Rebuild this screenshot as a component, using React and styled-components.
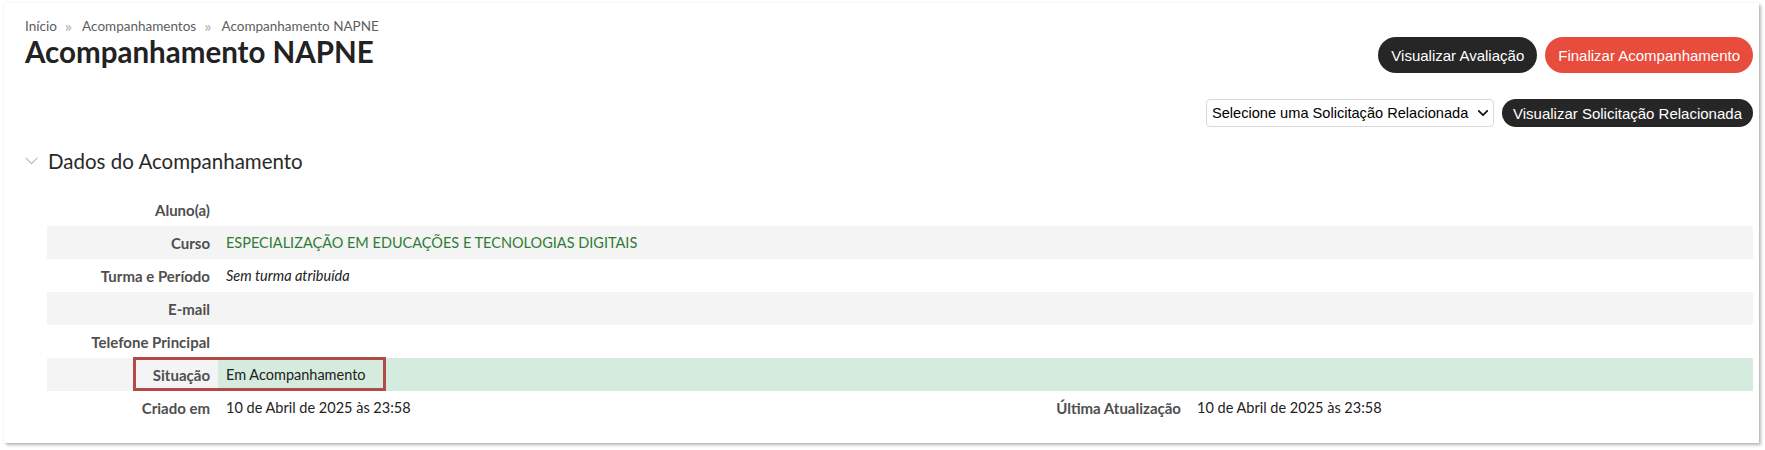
import styled, { createGlobalStyle } from 'styled-components';

const GlobalStyle = createGlobalStyle`
  html, body {
    margin: 0;
    padding: 0;
    background: #ffffff;
  }
  body {
    font-family: Lato, "Noto Sans", sans-serif;
    color: #222;
  }
`;

const Page = styled.div`
  padding: 3px 6px 7px 4px;
`;

const Card = styled.div`
  background: #fff;
  box-shadow: 2px 2px 3px rgba(0, 0, 0, 0.28), 0 0 2px rgba(0, 0, 0, 0.08);
  padding: 14px 6px 19px 21px;
`;

const Header = styled.div`
  display: flex;
  justify-content: space-between;
  align-items: flex-start;
`;

const TitleBlock = styled.div`
  display: flex;
  flex-direction: column;
`;

const Breadcrumb = styled.nav`
  display: flex;
  align-items: center;
  font-size: 13.5px;
  line-height: 18px;
  color: #5e5e5e;
`;

const Crumb = styled.span``;

const Separator = styled.span`
  color: #bdbdbd;
  margin: 0 10px 0 8px;
  font-size: 16px;
  font-weight: 700;
  line-height: 18px;
`;

const Title = styled.h1`
  margin: 0;
  font-size: 29.5px;
  line-height: 34px;
  font-weight: 700;
  color: #222;
`;

const ButtonGroup = styled.div`
  display: flex;
  align-items: center;
  gap: 8px;
  margin-top: ${({ $top }) => $top || 0}px;
`;

const PillButton = styled.button`
  font-family: "Liberation Sans", Arial, sans-serif;
  font-size: 15px;
  color: #fff;
  border: none;
  cursor: pointer;
  height: ${({ $small }) => ($small ? 28 : 36)}px;
  border-radius: 18px;
  padding: 0 ${({ $small }) => ($small ? 11 : 13)}px;
  background: ${({ $variant }) => ($variant === 'danger' ? '#e74c3c' : '#262626')};
  white-space: nowrap;
`;

const Toolbar = styled.div`
  display: flex;
  justify-content: flex-end;
  align-items: center;
  gap: 8px;
  margin-top: 26px;
`;

const SelectBox = styled.label`
  display: flex;
  align-items: center;
  gap: 2px;
  box-sizing: border-box;
  width: 288px;
  height: 28px;
  border: 1px solid #d9d9d9;
  border-radius: 4px;
  padding: 0 5px 0 5px;
  background: #fff;
`;

const Select = styled.select`
  appearance: none;
  border: none;
  outline: none;
  background: transparent;
  font-family: "Liberation Sans", Arial, sans-serif;
  font-size: 14.6px;
  color: #000;
  padding: 0;
  flex: 1;
  min-width: 0;
`;

const SectionHeader = styled.div`
  display: flex;
  align-items: center;
  gap: 10px;
  margin-top: 19px;
  height: 30px;
`;

const SectionTitle = styled.h2`
  margin: 0;
  font-size: 20.5px;
  font-weight: 400;
  color: #2a2a2a;
`;

const Table = styled.div`
  margin: 17px 0 0 22px;
  display: flex;
  flex-direction: column;
`;

const Row = styled.div`
  position: relative;
  display: grid;
  grid-template-columns: 171px 1fr 171px 564px;
  height: 33px;
  align-items: stretch;
  background: ${({ $striped }) => ($striped ? '#f4f4f4' : 'transparent')};
`;

const Label = styled.div`
  display: flex;
  align-items: center;
  justify-content: flex-end;
  padding-right: 8px;
  font-size: 15px;
  font-weight: 700;
  color: #4f4f4f;
  white-space: nowrap;
`;

const Value = styled.div`
  display: flex;
  align-items: center;
  padding-left: 8px;
  font-size: 14.5px;
  color: ${({ $tone }) => ($tone === 'green' ? '#2f7d34' : '#222')};
  font-style: ${({ $italic }) => ($italic ? 'italic' : 'normal')};
  background: ${({ $highlight }) => ($highlight ? '#d4ebdd' : 'transparent')};
  grid-column: ${({ $span }) => ($span ? '2 / -1' : 'auto')};
`;

const Annotation = styled.div`
  position: absolute;
  left: 86px;
  top: -1px;
  width: 253px;
  height: 34px;
  box-sizing: border-box;
  border: 3px solid #b24a4a;
  pointer-events: none;
`;

const Chevron = ({ size = 14, color = '#bbb', stroke = 1.4 }) => (
  <svg width={size} height={size * 0.6} viewBox="0 0 14 8" fill="none">
    <polyline points="1,1 7,7 13,1" stroke={color} strokeWidth={stroke} strokeLinecap="round" strokeLinejoin="round" />
  </svg>
);

const rows = [
  { label: 'Aluno(a)', value: '' },
  { label: 'Curso', value: 'ESPECIALIZAÇÃO EM EDUCAÇÕES E TECNOLOGIAS DIGITAIS', tone: 'green' },
  { label: 'Turma e Período', value: 'Sem turma atribuída', italic: true },
  { label: 'E-mail', value: '' },
  { label: 'Telefone Principal', value: '' },
  { label: 'Situação', value: 'Em Acompanhamento', highlight: true, annotated: true },
];

export default function App() {
  return (
    <Page>
      <GlobalStyle />
      <Card>
        <Header>
          <TitleBlock>
            <Breadcrumb>
              <Crumb>Início</Crumb>
              <Separator>»</Separator>
              <Crumb>Acompanhamentos</Crumb>
              <Separator>»</Separator>
              <Crumb>Acompanhamento NAPNE</Crumb>
            </Breadcrumb>
            <Title>Acompanhamento NAPNE</Title>
          </TitleBlock>
          <ButtonGroup $top={20}>
            <PillButton>Visualizar Avaliação</PillButton>
            <PillButton $variant="danger">Finalizar Acompanhamento</PillButton>
          </ButtonGroup>
        </Header>

        <Toolbar>
          <SelectBox>
            <Select defaultValue="">
              <option value="">Selecione uma Solicitação Relacionada</option>
            </Select>
            <Chevron size={10} color="#111" stroke={2.4} />
          </SelectBox>
          <PillButton $small>Visualizar Solicitação Relacionada</PillButton>
        </Toolbar>

        <SectionHeader>
          <Chevron size={13} color="#b8b8b8" stroke={1.3} />
          <SectionTitle>Dados do Acompanhamento</SectionTitle>
        </SectionHeader>

        <Table>
          {rows.map((r, i) => (
            <Row key={r.label} $striped={i % 2 === 1}>
              <Label>{r.label}</Label>
              <Value $span $tone={r.tone} $italic={r.italic} $highlight={r.highlight}>
                {r.value}
              </Value>
              {r.annotated && <Annotation />}
            </Row>
          ))}
          <Row>
            <Label>Criado em</Label>
            <Value>10 de Abril de 2025 às 23:58</Value>
            <Label>Última Atualização</Label>
            <Value>10 de Abril de 2025 às 23:58</Value>
          </Row>
        </Table>
      </Card>
    </Page>
  );
}
